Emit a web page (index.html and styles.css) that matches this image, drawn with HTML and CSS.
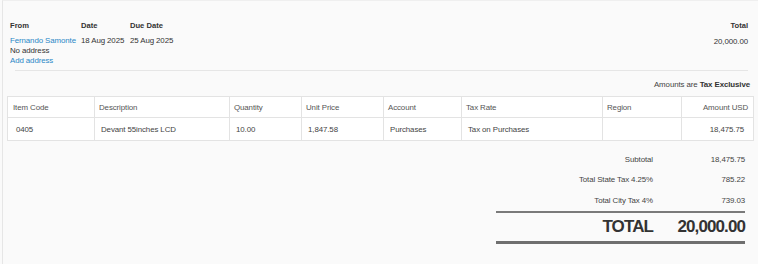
FILE: index.html
```html
<!DOCTYPE html>
<html lang="en">
<head>
<meta charset="utf-8">
<title>Bill</title>
<link rel="stylesheet" href="styles.css">
</head>
<body>
<div class="panel">
  <div class="head">
    <div class="col from">
      <div class="label">From</div>
      <a class="link name">Fernando Samonte</a>
      <div class="val">No address</div>
      <a class="link">Add address</a>
    </div>
    <div class="col date">
      <div class="label">Date</div>
      <div class="val first">18 Aug 2025</div>
    </div>
    <div class="col due">
      <div class="label">Due Date</div>
      <div class="val first">25 Aug 2025</div>
    </div>
    <div class="col total">
      <div class="label">Total</div>
      <div class="val first">20,000.00</div>
    </div>
  </div>
  <div class="sep"></div>
  <div class="amounts">Amounts are <b>Tax Exclusive</b></div>
  <table class="items">
    <colgroup>
      <col style="width:87px"><col style="width:135px"><col style="width:72px"><col style="width:82px">
      <col style="width:78px"><col style="width:141px"><col style="width:79px"><col style="width:72px">
    </colgroup>
    <thead>
      <tr>
        <th>Item Code</th><th>Description</th><th>Quantity</th><th>Unit Price</th>
        <th>Account</th><th>Tax Rate</th><th>Region</th><th class="num">Amount USD</th>
      </tr>
    </thead>
    <tbody>
      <tr>
        <td class="code">0405</td><td>Devant 55inches LCD</td><td>10.00</td><td>1,847.58</td>
        <td>Purchases</td><td>Tax on Purchases</td><td></td><td class="num">18,475.75</td>
      </tr>
    </tbody>
  </table>
  <div class="totals">
    <div class="row"><span class="tl">Subtotal</span><span class="tv">18,475.75</span></div>
    <div class="row"><span class="tl">Total State Tax 4.25%</span><span class="tv">785.22</span></div>
    <div class="row"><span class="tl">Total City Tax 4%</span><span class="tv">739.03</span></div>
    <div class="grand"><span class="tl">TOTAL</span><span class="tv">20,000.00</span></div>
  </div>
</div>
</body>
</html>
```

FILE: styles.css
```css
html, body {
  margin: 0;
  padding: 0;
  background: #fafafa;
}
body {
  font-family: "Liberation Sans", Arial, sans-serif;
  font-size: 7.9px;
  letter-spacing: -0.1px;
  color: #444;
}
.panel {
  margin-left: 2px;
  height: 263px;
  border-left: 1px solid #e6e6e6;
  border-top: 1px solid #efefef;
  padding: 0 5px 0 4px;
}
.head {
  display: flex;
  padding: 20px 5px 0 3px;
}
.col {
  display: flex;
  flex-direction: column;
}
.from { width: 71px; }
.date { width: 49px; }
.due { flex: 1; }
.total { align-items: flex-end; }
.label {
  font-weight: bold;
  color: #333;
  font-size: 7.6px;
  letter-spacing: 0;
  line-height: 10px;
  margin-bottom: 5px;
}
.val, .link {
  line-height: 10px;
  white-space: nowrap;
}
.val { color: #333; }
.link {
  color: #2a88c7;
  text-decoration: none;
}
.total .val { margin-top: 1px; }
.sep {
  height: 1px;
  background: #e6e6e6;
  margin: 4px 5px 0 8px;
}
.amounts {
  text-align: right;
  line-height: 10px;
  margin-top: 9px;
  padding-right: 3px;
  color: #444;
}
.amounts b { color: #333; }
.items {
  margin-top: 6px;
  width: 746px;
  table-layout: fixed;
  border-collapse: collapse;
  background: #fff;
}
.items th, .items td {
  border: 1px solid #e3e3e3;
  text-align: left;
  white-space: nowrap;
  overflow: hidden;
}
.items th {
  font-weight: normal;
  color: #555;
  height: 20px;
  padding: 0 4px;
}
.items th:first-child { padding-left: 5px; }
.items td {
  color: #444;
  height: 22px;
  padding: 0 6px;
}
.items td.code { padding-left: 8px; }
.items th.num { text-align: right; padding-right: 5px; }
.items td.num { text-align: right; padding-right: 9px; }
.totals {
  width: 249px;
  margin: 8px 8px 0 auto;
}
.row {
  display: flex;
  height: 20.5px;
  align-items: center;
}
.tl {
  width: 157px;
  text-align: right;
  color: #444;
}
.tv {
  flex: 1;
  text-align: right;
}
.grand {
  display: flex;
  align-items: center;
  height: 28px;
  border-top: 2px solid #7a7a7a;
  border-bottom: 3px solid #6f6f6f;
  margin-top: 0;
  font-weight: bold;
  font-size: 17px;
  letter-spacing: -0.9px;
  color: #333;
}
.grand .tl { color: #333; }
```
